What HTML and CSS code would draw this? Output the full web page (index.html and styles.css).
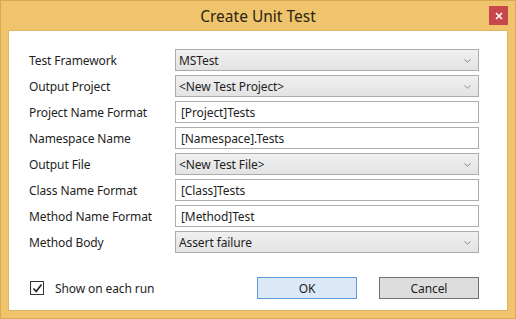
FILE: index.html
```html
<!DOCTYPE html>
<html>
<head>
<meta charset="utf-8">
<link rel="stylesheet" href="styles.css">
</head>
<body>
<div class="window">
  <div class="titlebar">
    <div class="title">Create Unit Test</div>
    <div class="close"><svg width="8" height="8" viewBox="0 0 8 8"><path d="M1 1L7 7M7 1L1 7" stroke="#fff" stroke-width="1.6"/></svg></div>
  </div>
  <div class="client">
    <div class="form">
      <div class="row"><div class="label">Test Framework</div><div class="field select"><span>MSTest</span><svg class="chev" width="7" height="4" viewBox="0 0 7 4"><path d="M0.5 0.5L3.5 3.2L6.5 0.5" stroke="#8a8a8a" fill="none"/></svg></div></div>
      <div class="row"><div class="label">Output Project</div><div class="field select"><span>&lt;New Test Project&gt;</span><svg class="chev" width="7" height="4" viewBox="0 0 7 4"><path d="M0.5 0.5L3.5 3.2L6.5 0.5" stroke="#8a8a8a" fill="none"/></svg></div></div>
      <div class="row"><div class="label">Project Name Format</div><div class="field text"><span>[Project]Tests</span></div></div>
      <div class="row"><div class="label">Namespace Name</div><div class="field text"><span>[Namespace].Tests</span></div></div>
      <div class="row"><div class="label">Output File</div><div class="field select"><span>&lt;New Test File&gt;</span><svg class="chev" width="7" height="4" viewBox="0 0 7 4"><path d="M0.5 0.5L3.5 3.2L6.5 0.5" stroke="#8a8a8a" fill="none"/></svg></div></div>
      <div class="row"><div class="label">Class Name Format</div><div class="field text"><span>[Class]Tests</span></div></div>
      <div class="row"><div class="label">Method Name Format</div><div class="field text"><span>[Method]Test</span></div></div>
      <div class="row"><div class="label">Method Body</div><div class="field select"><span>Assert failure</span><svg class="chev" width="7" height="4" viewBox="0 0 7 4"><path d="M0.5 0.5L3.5 3.2L6.5 0.5" stroke="#8a8a8a" fill="none"/></svg></div></div>
    </div>
    <div class="footer">
      <div class="check">
        <div class="box"><svg width="11" height="11" viewBox="0 0 11 11"><path d="M1.5 5.5L4.2 8.5L9.5 1.5" stroke="#222" stroke-width="1.6" fill="none"/></svg></div>
        <span>Show on each run</span>
      </div>
      <div class="buttons">
        <div class="btn ok">OK</div>
        <div class="btn">Cancel</div>
      </div>
    </div>
  </div>
</div>
</body>
</html>
```
FILE: styles.css
```css
* { box-sizing: border-box; }
html, body { margin: 0; padding: 0; }
body {
  width: 516px; height: 319px; overflow: hidden;
  font-family: "Noto Sans", "Open Sans", sans-serif;
  font-size: 12px; letter-spacing: -0.1px; color: #1e1e1e;
  background: #f0c46c;
}
.window {
  width: 516px; height: 319px;
  background: #f0c46c;
  border: 1px solid #d8a950;
  display: flex; flex-direction: column;
  padding: 0 7px 7px 7px;
}
.titlebar {
  height: 29px; position: relative;
  display: flex; align-items: center; justify-content: center;
}
.title { font-size: 15.5px; color: #2a2412; padding-top: 1px; letter-spacing: 0; }
.close {
  position: absolute; right: 0; top: 5px;
  width: 19px; height: 19px; background: #c7474a;
  display: flex; align-items: center; justify-content: center;
}
.client {
  flex: 1; background: #fff;
  border: 1px solid #e0b560;
  padding: 18px 28px 0 20px;
  display: flex; flex-direction: column;
}
.form { display: flex; flex-direction: column; gap: 4px; }
.row { display: flex; align-items: center; height: 22px; }
.label { width: 146px; padding-top: 1px; }
.field {
  flex: 1; height: 22px; display: flex; align-items: center;
  padding: 0 3px; position: relative;
}
.select {
  background: linear-gradient(#f0f0f0, #e3e3e3);
  border: 1px solid #acacac;
}
.text { background: #fff; border: 1px solid #abadb3; padding-left: 5px; }
.chev { position: absolute; right: 7px; top: 9px; }
.footer {
  margin-top: 24px;
  display: flex; align-items: center; justify-content: space-between;
  padding-left: 1px;
}
.check { display: flex; align-items: center; gap: 11px; }
.box {
  width: 14px; height: 14px; border: 1px solid #333; background: #fff;
  display: flex; align-items: center; justify-content: center;
}
.buttons { display: flex; gap: 22px; }
.btn {
  width: 100px; height: 22px; border: 1px solid #707070;
  background: #dddddd; display: flex; align-items: center; justify-content: center;
}
.ok { background: #dce8f5; border-color: #5b9bd8; }
```
